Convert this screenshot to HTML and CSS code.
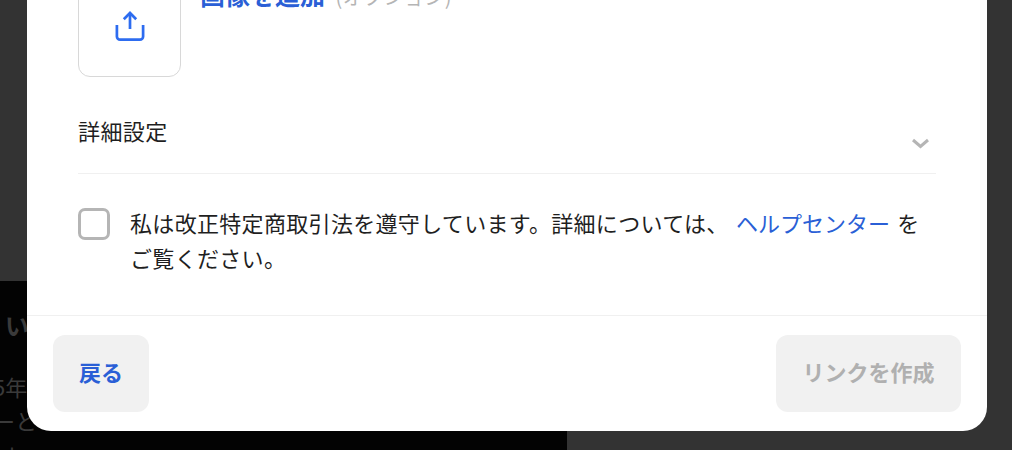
FILE: index.html
```html
<!DOCTYPE html>
<html lang="ja">
<head>
    <meta charset="UTF-8">
    <meta name="viewport" content="width=device-width, initial-scale=1.0">
    <title>リンクを作成</title>
    <link rel="stylesheet" href="styles.css">
</head>
<body>
    <!-- Page behind the dialog -->
    <div class="backdrop">
        <div class="hero">
            <p class="hero-title">い</p>
            <p class="hero-line">5年</p>
            <p class="hero-line">ーと</p>
            <p class="hero-line hero-line-last">士</p>
        </div>
    </div>

    <div class="modal">
        <div class="modal-body">
            <div class="image-row">
                <button class="image-box" aria-label="画像を追加">
                    <svg width="32" height="32" viewBox="0 0 32 32" fill="none" stroke="#2d6cf0" stroke-width="2.7">
                        <path d="M16 18V2.5"/>
                        <path d="M9.8 8.2L16 2l6.2 6.2"/>
                        <path d="M2.9 14v11.5a3.2 3.2 0 0 0 3.2 3.2h19.8a3.2 3.2 0 0 0 3.2-3.2V14"/>
                    </svg>
                </button>
                <div class="image-label"><strong>画像を追加</strong> <span>(オプション)</span></div>
            </div>

            <div class="details">
                <span class="details-title">詳細設定</span>
                <svg class="chevron" width="20" height="12" viewBox="0 0 20 12" fill="none" stroke="#b5b5b5" stroke-width="3">
                    <path d="M2 2l7.5 6.5L17 2"/>
                </svg>
            </div>

            <label class="agree">
                <input type="checkbox" class="agree-box">
                <span class="agree-text">私は改正特定商取引法を遵守しています。詳細については、 <a href="#">ヘルプセンター</a> をご覧ください。</span>
            </label>
        </div>

        <div class="modal-footer">
            <button class="btn btn-back">戻る</button>
            <button class="btn btn-create" disabled>リンクを作成</button>
        </div>
    </div>
</body>
</html>
```

FILE: styles.css
```css
* {
    margin: 0;
    padding: 0;
    box-sizing: border-box;
    font-family: "Noto Sans CJK JP", "Liberation Sans", sans-serif;
}

body {
    width: 1012px;
    height: 450px;
    overflow: hidden;
    background-color: #333;
    position: relative;
}

.backdrop {
    display: flex;
    flex-direction: column;
    justify-content: flex-end;
    height: 450px;
}

.hero {
    width: 567px;
    height: 169px;
    background-color: #030303;
    color: #3a3a3a;
    overflow: hidden;
    padding-top: 28px;
}

.hero-title {
    font-size: 24px;
    font-weight: 700;
    line-height: 32px;
    margin-left: 5px;
}

.hero-line {
    font-size: 22px;
    line-height: 34px;
    margin-left: -7px;
}

.hero-title + .hero-line {
    margin-top: 28px;
}

.hero-line-last {
    margin-left: 1px;
    margin-top: 2px;
}

.modal {
    position: absolute;
    left: 27px;
    top: -40px;
    width: 960px;
    height: 471px;
    background-color: #fff;
    border-radius: 0 0 24px 24px;
    display: flex;
    flex-direction: column;
}

.modal-body {
    flex: 1;
    padding: 14px 51px 0;
}

.image-row {
    display: flex;
    gap: 19px;
}

.image-box {
    width: 103px;
    height: 103px;
    background: #fff;
    border: 1px solid #d8d8d8;
    border-radius: 12px;
    display: flex;
    align-items: center;
    justify-content: center;
}

.image-box svg {
    margin-top: 3px;
}

.image-label {
    font-size: 20px;
    line-height: 26px;
    margin-top: 7px;
    color: #b5b5b5;
}

.image-label strong {
    font-size: 25px;
    color: #2a5fd6;
    font-weight: 700;
}

.image-label span {
    margin-left: 6px;
    letter-spacing: 0.4px;
}

.details {
    display: flex;
    justify-content: space-between;
    height: 97px;
    padding-top: 38px;
    border-bottom: 1px solid #f0f0f0;
}

.details-title {
    font-size: 22px;
    line-height: 30px;
    letter-spacing: 0.4px;
    color: #1f1f1f;
}

.chevron {
    margin-top: 23px;
    margin-right: 5px;
}

.agree {
    display: flex;
    gap: 20px;
    margin-top: 34px;
}

.agree-box {
    appearance: none;
    flex: none;
    width: 32px;
    height: 32px;
    background: #fff;
    border: 3px solid #b5b5b5;
    border-radius: 7px;
}

.agree-text {
    font-size: 22px;
    line-height: 35px;
    letter-spacing: 0.32px;
    word-spacing: 2px;
    color: #1f1f1f;
    margin-top: -3px;
}

.agree-text a {
    color: #2a5fd6;
    letter-spacing: 0;
    text-decoration: none;
}

.modal-footer {
    display: flex;
    justify-content: space-between;
    padding: 19px 26px;
    border-top: 1px solid #f0f0f0;
}

.btn {
    height: 77px;
    border: none;
    border-radius: 12px;
    background-color: #f1f1f1;
    font-size: 22px;
    font-weight: 700;
    padding-bottom: 5px;
}

.btn-back {
    width: 96px;
    color: #2a5fd6;
}

.btn-create {
    width: 185px;
    color: #b0b0b0;
}
```
